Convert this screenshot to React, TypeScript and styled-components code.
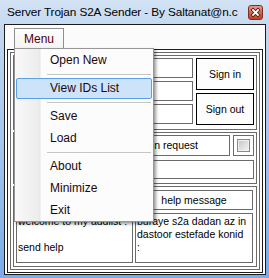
import styled, { createGlobalStyle } from "styled-components";

const GlobalStyle = createGlobalStyle`
  html, body {
    margin: 0;
    padding: 0;
    background: #fff;
  }
  body {
    font-family: "Liberation Sans", Arial, sans-serif;
  }
`;

const Window = styled.div`
  position: relative;
  width: 269px;
  height: 278px;
  box-sizing: border-box;
  padding: 0 3px 3px 4px;
  display: flex;
  flex-direction: column;
  background: linear-gradient(#d3e3f5, #c2d7f0 30px, #a3c4ec 55%, #78abe7);
`;

const TitleBar = styled.div`
  height: 24px;
  flex: none;
  display: flex;
  justify-content: space-between;
  padding: 0 3px;
`;

const Title = styled.div`
  font-size: 11.8px;
  letter-spacing: -0.12px;
  color: #000;
  line-height: 24px;
  white-space: nowrap;
`;

const CloseBtn = styled.svg`
  margin-top: 5px;
  display: block;
  flex: none;
`;

const Client = styled.div`
  flex: 1;
  display: flex;
  flex-direction: column;
  background: #fff;
  border: 1px solid #1c1c1c;
`;

const MenuStrip = styled.div`
  height: 24px;
  flex: none;
  box-sizing: border-box;
  padding: 3px 0 0 9px;
  background: #fbfbfb;
  display: flex;
`;

const MenuTab = styled.div`
  width: 50px;
  height: 21px;
  box-sizing: border-box;
  border: 1px solid #8e8f8f;
  border-bottom: none;
  background: linear-gradient(#fdfdfd, #f4f4f4);
  color: #500010;
  font-size: 12px;
  line-height: 20px;
  text-align: center;
`;

const OuterPanel = styled.div`
  flex: 1;
  display: flex;
  margin: 0 2px 1px 2px;
  padding: 2px;
  border: 1px solid #1c1c1c;
`;

const InnerPanel = styled.div`
  flex: 1;
  display: flex;
  flex-direction: column;
  gap: 2px;
  padding: 2px;
  border: 1px solid #6a6a6a;
`;

const Group = styled.div<{ $h: number; $pad?: string }>`
  height: ${(p) => p.$h}px;
  box-sizing: border-box;
  border: 1px solid #6a6a6a;
  padding: ${(p) => p.$pad || "2px"};
`;

const LoginGrid = styled.div`
  display: grid;
  grid-template-columns: 1fr 58px;
  column-gap: 3px;
`;

const Stack = styled.div<{ $gap: number }>`
  display: flex;
  flex-direction: column;
  gap: ${(p) => p.$gap}px;
`;

const Row = styled.div<{ $cols: string }>`
  display: grid;
  grid-template-columns: ${(p) => p.$cols};
  column-gap: 3px;
`;

const HelpGrid = styled.div`
  display: grid;
  grid-template-columns: 117px 118px;
  grid-template-rows: 20px 50px;
  gap: 3px 2px;
`;

const TextBox = styled.div<{ $h?: number; $align?: string; $padR?: number }>`
  height: ${(p) => (p.$h ? `${p.$h}px` : "auto")};
  box-sizing: border-box;
  border: 1px solid #6a6a6a;
  background: #fff;
  font-size: 10.5px;
  color: #000;
  text-align: ${(p) => p.$align || "left"};
  padding-right: ${(p) => p.$padR || 0}px;
  line-height: ${(p) => (p.$h ? p.$h - 2 : 18)}px;
  white-space: nowrap;
  overflow: hidden;
`;

const MultiLine = styled.div`
  box-sizing: border-box;
  border: 1px solid #6a6a6a;
  background: #fff;
  font-size: 10.5px;
  line-height: 13px;
  padding: 1px 1px 0 1px;
  color: #000;
  white-space: pre;
  overflow: hidden;
`;

const Button = styled.div`
  height: 32px;
  box-sizing: border-box;
  border: 1px solid #000;
  background: #fdfdfd;
  font-size: 10.5px;
  color: #000;
  display: flex;
  align-items: center;
  justify-content: center;
`;

const CheckCell = styled.div`
  border: 1px solid #6a6a6a;
  display: flex;
  align-items: center;
  justify-content: center;
`;

const CheckBox = styled.span`
  width: 13px;
  height: 13px;
  box-sizing: border-box;
  border: 1px solid #8a8a8a;
  box-shadow: inset 0 0 0 1px #f0f0f0;
  background: linear-gradient(135deg, #c4c4c4, #e2e2e2 60%, #f2f2f2);
`;

const Dropdown = styled.div`
  position: absolute;
  left: 14px;
  top: 48px;
  width: 140px;
  box-sizing: border-box;
  border: 1px solid #979797;
  background: linear-gradient(
    to right,
    #f9f9f9 0,
    #ececec 24px,
    #e4e4e4 25px,
    #fcfcfc 26px,
    #fcfcfc 100%
  );
  box-shadow: 2px 2px 3px rgba(0, 0, 0, 0.4);
  display: flex;
  flex-direction: column;
`;

const Item = styled.div<{ $active?: boolean }>`
  height: ${(p) => (p.$active ? 21 : 22)}px;
  box-sizing: border-box;
  margin: ${(p) => (p.$active ? "1px 1px 0" : "0")};
  padding-left: ${(p) => (p.$active ? 33 : 35)}px;
  border: ${(p) => (p.$active ? "1px solid #5aa0e8" : "none")};
  border-radius: ${(p) => (p.$active ? 2 : 0)}px;
  background: ${(p) => (p.$active ? "#cde3fa" : "transparent")};
  font-size: 12px;
  line-height: ${(p) => (p.$active ? 19 : 22)}px;
  color: #1a0808;
  white-space: nowrap;
`;

const Separator = styled.div`
  height: 6px;
  margin: 0 2px 0 32px;
  box-sizing: border-box;
  padding-top: 3px;
  &::after {
    content: "";
    display: block;
    height: 1px;
    background: #c5c5c5;
    border-bottom: 1px solid #fff;
  }
`;

const menuItems: (string | null)[] = [
  "Open New",
  null,
  "View IDs List",
  null,
  "Save",
  "Load",
  null,
  "About",
  "Minimize",
  "Exit",
];

function Close() {
  return (
    <CloseBtn width="15" height="15" viewBox="0 0 15 15">
      <defs>
        <linearGradient id="cg" x1="0" y1="0" x2="0" y2="1">
          <stop offset="0" stopColor="#eaa294" />
          <stop offset="0.5" stopColor="#d26650" />
          <stop offset="1" stopColor="#c2411f" />
        </linearGradient>
      </defs>
      <rect x="0.5" y="0.5" width="14" height="14" rx="2.5" fill="url(#cg)" stroke="#7b2f24" />
      <path d="M5 5 L10 10 M10 5 L5 10" stroke="#4a1a12" strokeWidth="3.4" strokeLinecap="square" />
      <path d="M5 5 L10 10 M10 5 L5 10" stroke="#fff" strokeWidth="1.8" strokeLinecap="square" />
    </CloseBtn>
  );
}

export default function App() {
  return (
    <Window>
      <GlobalStyle />
      <TitleBar>
        <Title>Server Trojan S2A Sender - By Saltanat@n.c</Title>
        <Close />
      </TitleBar>
      <Client>
        <MenuStrip>
          <MenuTab>Menu</MenuTab>
        </MenuStrip>
        <OuterPanel>
          <InnerPanel>
            <Group $h={75}>
              <LoginGrid>
                <Stack $gap={3}>
                  <TextBox $h={20} />
                  <TextBox $h={20} />
                  <TextBox $h={20} />
                </Stack>
                <Stack $gap={3}>
                  <Button>Sign in</Button>
                  <Button>Sign out</Button>
                </Stack>
              </LoginGrid>
            </Group>
            <Group $h={52}>
              <Stack $gap={4}>
                <Row $cols="1fr 21px">
                  <TextBox $h={21} $align="right" $padR={31}>
                    Send join request
                  </TextBox>
                  <CheckCell>
                    <CheckBox />
                  </CheckCell>
                </Row>
                <TextBox $h={19} />
              </Stack>
            </Group>
            <Group $h={81} $pad="3px 2px">
              <HelpGrid>
                <TextBox $h={20} />
                <TextBox $h={20} $align="center">
                  help message
                </TextBox>
                <MultiLine>{"welcome to my addlist :\n\nsend help"}</MultiLine>
                <MultiLine>
                  {"buraye s2a dadan az in\ndastoor estefade konid\n:"}
                </MultiLine>
              </HelpGrid>
            </Group>
          </InnerPanel>
        </OuterPanel>
      </Client>
      <Dropdown>
        {menuItems.map((label, i) =>
          label === null ? (
            <Separator key={i} />
          ) : (
            <Item key={i} $active={label === "View IDs List"}>
              {label}
            </Item>
          )
        )}
      </Dropdown>
    </Window>
  );
}
